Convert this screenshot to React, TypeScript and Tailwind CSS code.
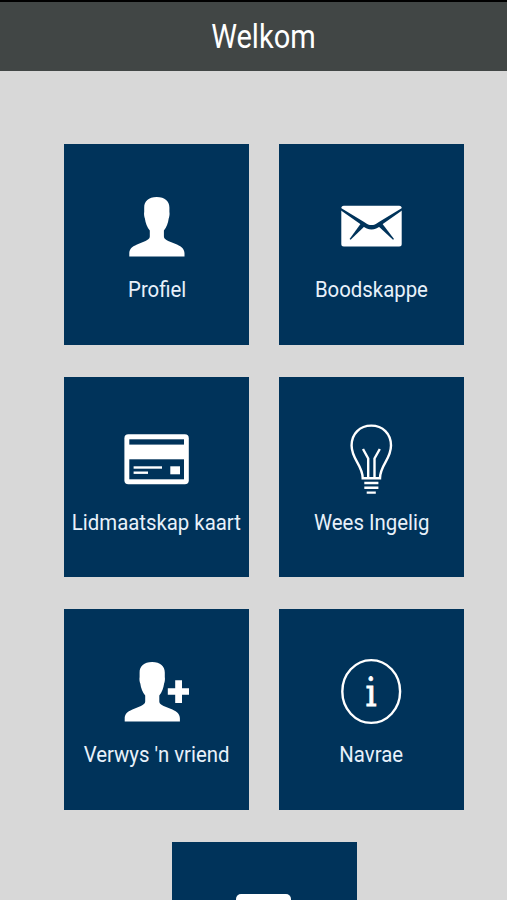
import type { ReactNode } from "react";

const Icon = ({ children }: { children: ReactNode }) => (
  <svg viewBox="0 0 80 80" className="w-20 h-20 shrink-0" fill="white" aria-hidden="true">
    {children}
  </svg>
);

const personPath =
  "M39.7 10C31.5 10 27.2 14.5 27.2 20.5V25C26.8 27 27.2 30 27.9 31.5C28.4 36 30.2 40.5 32.8 43.5V49.5C32.8 51.5 31 52.8 28.5 54L20 57.6C14.5 60 12.3 62.5 12.3 66.5V69.4H67.5V66.5C67.5 62.5 65 60 60 57.6L51.2 54C48.7 52.8 46.9 51.5 46.9 49.5V43.5C49.5 40.5 51.2 36 51.7 31.5C52.4 30 52.8 27 52.4 25V20.5C52.4 14.5 48 10 39.7 10Z";

const ProfileIcon = () => (
  <Icon>
    <path d={personPath} />
  </Icon>
);

const MailIcon = () => (
  <Icon>
    <rect x="10.3" y="18.7" width="60.4" height="40.8" rx="2.5" />
    <g className="fill-[#00335a]">
      <path d="M10 21L33.5 35.2C38.5 39 42.5 39 47.5 35.2L71 21V23.4L50 38.2C43.5 44 37.5 44 31 38.2L10 23.4Z" />
      <path d="M30.2 36L34.4 38.6L19.6 52.8L18.6 52Z" />
      <path d="M50.8 36L46.6 38.6L62 52.8L63 52Z" />
    </g>
  </Icon>
);

const CardIcon = () => (
  <Icon>
    <rect x="7.4" y="14.2" width="64.4" height="50" rx="4" />
    <g className="fill-[#00335a]">
      <rect x="12.3" y="19.3" width="54.7" height="5.3" />
      <rect x="12.3" y="39.3" width="54.7" height="20" />
    </g>
    <rect x="16.6" y="46.3" width="28.4" height="2.4" />
    <rect x="16.6" y="51.5" width="14.4" height="2.4" />
    <rect x="53.3" y="46.3" width="9.7" height="8" />
  </Icon>
);

const BulbIcon = () => (
  <Icon>
    <g fill="none" stroke="white" strokeWidth="2.4">
      <path d="M31.7 58.2C31.7 45 20.6 39.5 20.6 25.5C20.6 13.5 29 5.6 40.3 5.6C51.6 5.6 60 13.5 60 25.5C60 39.5 49 45 49 58.2Z" />
      <path d="M32 29L37.2 38.5V58M48.8 29L43.5 38.5V58" />
      <path d="M33.3 63H47.4M33.3 67.8H47.4M35.7 72.6H44.8" />
    </g>
  </Icon>
);

const AddFriendIcon = () => (
  <Icon>
    <path d={personPath} transform="translate(-4.6 0)" />
    <path d="M58.2 28.2H65V36.2H72V42.8H65V51H58.2V42.8H50.8V36.2H58.2Z" />
  </Icon>
);

const InfoIcon = () => (
  <Icon>
    <ellipse cx="40.2" cy="39.5" rx="28.9" ry="31.4" fill="none" stroke="white" strokeWidth="2.4" />
    <text
      x="44.5"
      y="53.7"
      textAnchor="middle"
      stroke="white"
      strokeWidth="0.8"
      transform="scale(0.9 1)"
      className="font-['DejaVu_Serif',serif] text-[38.5px]"
    >
      i
    </text>
  </Icon>
);

const MoreIcon = () => (
  <Icon>
    <rect x="12" y="9" width="55" height="60" rx="5" />
  </Icon>
);

const Tile = ({ icon, label }: { icon: ReactNode; label?: string }) => (
  <button className="flex flex-col items-center w-[185px] h-[200.5px] pt-[43px] bg-[#00335a]">
    {icon}
    <span className="mt-1.5 text-[22.5px] leading-8 whitespace-nowrap text-[#e8f1fa] scale-x-[0.905]">
      {label}
    </span>
  </button>
);

export default function App() {
  return (
    <div className="h-[900px] overflow-hidden bg-[#d8d8d8] font-[Roboto,sans-serif]">
      <header className="flex items-center justify-center h-[71px] pl-5 border-t-2 border-black bg-[#414645]">
        <h1 className="text-[33px] leading-none text-white scale-x-[0.88]">Welkom</h1>
      </header>
      <main className="flex flex-wrap justify-center gap-x-[29.5px] gap-y-8 w-[400px] ml-16 mt-[73px]">
        <Tile icon={<ProfileIcon />} label="Profiel" />
        <Tile icon={<MailIcon />} label="Boodskappe" />
        <Tile icon={<CardIcon />} label="Lidmaatskap kaart" />
        <Tile icon={<BulbIcon />} label="Wees Ingelig" />
        <Tile icon={<AddFriendIcon />} label="Verwys 'n vriend" />
        <Tile icon={<InfoIcon />} label="Navrae" />
        <Tile icon={<MoreIcon />} />
      </main>
    </div>
  );
}
